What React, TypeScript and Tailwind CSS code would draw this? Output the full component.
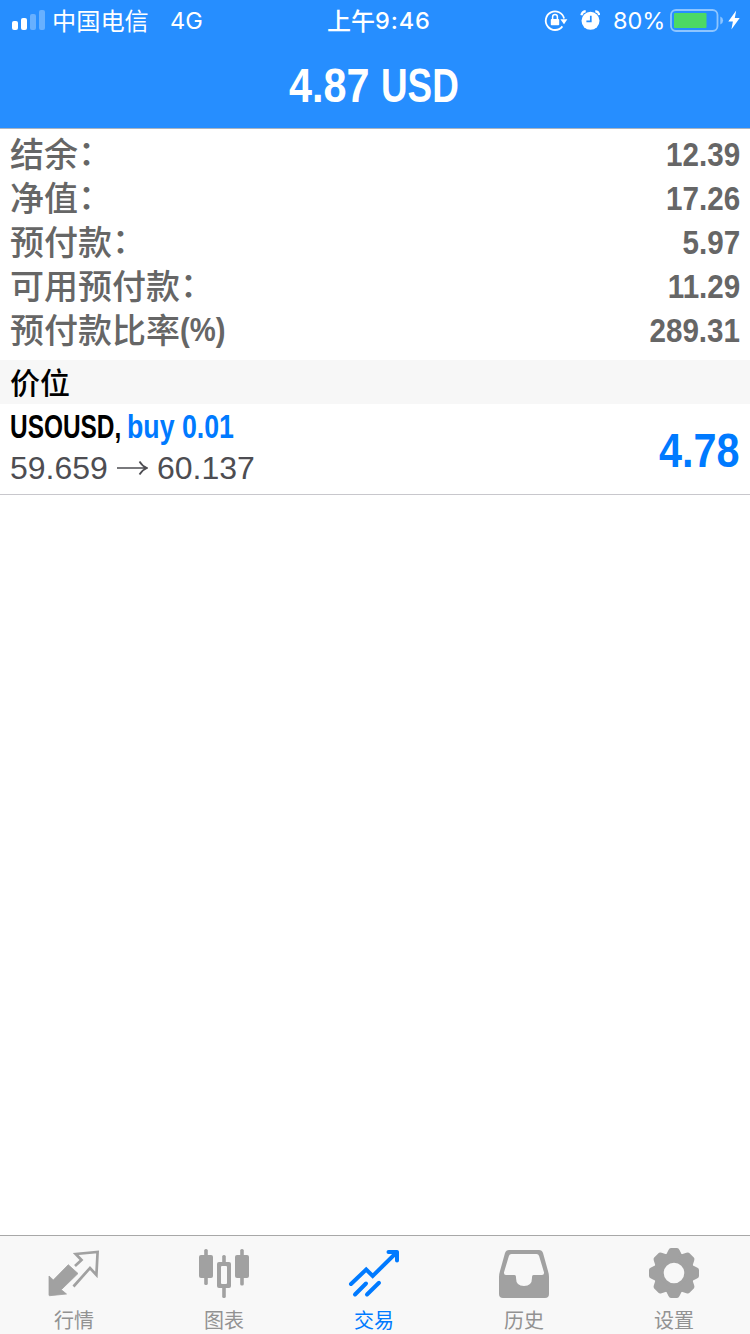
import React from "react";

const sans = "font-['Liberation_Sans','Noto_Sans_CJK_SC',sans-serif]";
const cjk = "font-['Noto_Sans_CJK_SC',sans-serif]";
const ui = "font-['Inter','Noto_Sans_CJK_SC',sans-serif]";

const rows = [
  { label: "结余", colon: true, value: "12.39" },
  { label: "净值", colon: true, value: "17.26" },
  { label: "预付款", colon: true, value: "5.97" },
  { label: "可用预付款", colon: true, value: "11.29" },
  { label: "预付款比率", suffix: "(%)", value: "289.31" },
];

function StatusBar() {
  return (
    <div className={`flex h-10 items-center text-white ${ui}`}>
      <svg className="ml-3 h-5 w-[33px] shrink-0" viewBox="0 0 33 20" fill="#fff">
        <rect x="0" y="11" width="6" height="9" rx="2" />
        <rect x="9" y="8" width="6" height="12" rx="2" />
        <rect x="18" y="4" width="6" height="16" rx="2" opacity=".3" />
        <rect x="27" y="0" width="6" height="20" rx="2" opacity=".3" />
      </svg>
      <span className={`ml-[7px] w-[118px] text-[24.2px] leading-10 whitespace-nowrap ${cjk}`}>中国电信</span>
      <span className="w-[157px] pt-px text-[23.5px] leading-10">4G</span>
      <span className={`w-12 text-[24px] leading-10 font-medium whitespace-nowrap ${cjk}`}>上午</span>
      <span className="w-[169px] pt-px text-[23.5px] leading-10 font-medium tracking-[0.9px]">9:46</span>
      <svg className="h-6 w-[24px] shrink-0" viewBox="0 0 24 24" fill="none" stroke="#fff">
        <path d="M18.4 18.4A9.3 9.3 0 1 1 20.1 10.5" strokeWidth="1.8" />
        <path d="M16.4 11.2h7L20 16.2z" fill="#fff" stroke="none" />
        <rect x="6.8" y="11" width="8.4" height="6.2" rx=".8" fill="#fff" stroke="none" />
        <path d="M8.6 11V9a2.4 2.4 0 0 1 4.8 0V11" strokeWidth="1.5" />
      </svg>
      <svg className="ml-[12px] h-6 w-[20px] shrink-0" viewBox="0 0 20 24" fill="none" stroke="#fff">
        <circle cx="10.5" cy="12.8" r="9" fill="#fff" stroke="none" />
        <path d="M1.4 7.2Q2.1 3.8 5.7 3.2M19.3 7.2Q18.9 3.8 15.3 3.2" strokeWidth="2.2" />
        <path d="M10.8 7.8V13.4H6.4" stroke="#268eff" strokeWidth="1.7" />
      </svg>
      <span className="ml-[13px] w-[57px] pt-px text-[23.5px] leading-10">80%</span>
      <svg className="h-6 w-[54px] shrink-0" viewBox="0 0 54 24" fill="none">
        <rect x="1" y="2" width="46.5" height="21" rx="5" stroke="#8ec5ff" strokeWidth="1.8" />
        <rect x="4" y="5" width="32.5" height="15" rx="1" fill="#4cd964" />
        <path d="M50.3 8.5q2.8 1.2 2.8 4t-2.8 4z" fill="#8ec5ff" />
      </svg>
      <svg className="ml-[4px] h-6 w-[12px] shrink-0" viewBox="0 0 12 24" fill="#fff">
        <path d="M8.2 2.5 0.3 13.4h4.6L3.4 21.5 11.7 10H6.8z" />
      </svg>
    </div>
  );
}

const tabs = [
  {
    label: "行情",
    icon: (
      <>
        <path d="M19.3 15.7 29 24.5 12.3 40.7 17.5 45 .7 46.7Q0 46.7 0 46V27L4.3 31z" fill="#a1a1a1" stroke="#a1a1a1" strokeWidth=".8" strokeLinejoin="round" />
        <path d="M26 17 32.5 11 26.7 5 48.6 3 47.4 26 41 19 24.5 37.5" fill="none" stroke="#a1a1a1" strokeWidth="2.7" />
      </>
    ),
  },
  {
    label: "图表",
    icon: (
      <g fill="#a1a1a1">
        <rect x="5.2" y="0" width="3.6" height="36" rx="1.6" />
        <rect x="0" y="6" width="14" height="23" rx="2" />
        <rect x="41.2" y="0" width="3.6" height="36.5" rx="1.6" />
        <rect x="36" y="6" width="14" height="23" rx="2" />
        <rect x="23.2" y="6" width="3.6" height="43" rx="1.6" />
        <rect x="18" y="13" width="14" height="26" rx="2" />
        <rect x="22" y="17" width="6" height="18" rx="1" fill="#f8f8f8" />
      </g>
    ),
  },
  {
    label: "交易",
    active: true,
    icon: (
      <g fill="none" stroke="#007aff" strokeWidth="4" strokeLinecap="round">
        <path d="M2 35 17.2 20.5 23.7 27 47.5 3.5" />
        <path d="M39.5 3H48V11.5" strokeLinejoin="round" />
        <path d="M6 45.5 17 34.5M18 45.5 30 33.8" />
      </g>
    ),
  },
  {
    label: "历史",
    icon: (
      <>
        <path d="M10 1h30q3 0 4 3l5 18q1 3 1 6v17q0 4-4 4H4q-4 0-4-4V28q0-3 1-6L6 4q1-3 4-3z" fill="#a1a1a1" />
        <path d="M12.5 5h25q2 0 2.6 2l4.8 16q.6 3-1.9 3H34.5q-1.5 0-1.5 2v1q0 8-8 8t-8-8v-1q0-2-1.5-2H7q-2.5 0-1.9-3L9.9 7q.6-2 2.6-2z" fill="#f8f8f8" />
      </>
    ),
  },
  {
    label: "设置",
    icon: (
      <g fill="#a1a1a1">
        <circle cx="25" cy="24" r="15.3" fill="none" stroke="#a1a1a1" strokeWidth="10" />
        {[0, 45, 90, 135, 180, 225, 270, 315].map((a) => (
          <path key={a} transform={`rotate(${a} 25 24)`} d="M17 6 19.5 1q.9-2 2.5-2h6q1.6 0 2.5 2L33 6v4H17z" />
        ))}
      </g>
    ),
  },
];

export default function App() {
  return (
    <div className={`flex h-[1334px] w-[750px] flex-col overflow-hidden bg-white ${sans}`}>
      <header className="h-[129px] shrink-0 border-b border-[#a9b4c2] bg-[#268eff]">
        <StatusBar />
        <h1 className="flex h-[88px] pl-[289px] text-[47.5px] leading-[92px] font-bold whitespace-nowrap text-white">
          <span className="w-[92px] origin-left scale-x-[0.87]">4.87</span>
          <span className="origin-left scale-x-[0.775]">USD</span>
        </h1>
      </header>
      <section className="h-[231px] shrink-0 pt-[3px]">
        {rows.map((r) => (
          <div key={r.label} className="flex h-11 justify-between pr-[10px] pl-[10px] leading-[44px] whitespace-nowrap text-[#666]">
            <div className="flex">
              <span className={`-mt-px h-11 text-[34px] font-medium ${cjk}`}>{r.label}</span>
              {r.colon && <span className={`-mt-[3px] h-11 text-[34px] font-medium ${cjk}`}>：</span>}
              {r.suffix && <span className="-mt-px origin-left scale-x-[0.86] text-[34px] font-bold">{r.suffix}</span>}
            </div>
            <span className="origin-right scale-x-[0.87] text-[34px] font-bold">{r.value}</span>
          </div>
        ))}
      </section>
      <div className={`h-11 shrink-0 bg-[#f7f7f7] pl-[10px] text-[30px] leading-[42px] font-medium text-black ${cjk}`}>价位</div>
      <section className="flex h-[91px] shrink-0 items-center justify-between border-b border-[#c8c7cc] pr-[11px] pl-[10px] whitespace-nowrap">
        <div>
          <div className="flex h-[45px] text-[33px] leading-[46px] font-bold">
            <span className="w-[117px] origin-left scale-x-[0.74] text-black">USOUSD,</span>
            <span className="origin-left scale-x-[0.81] text-[#007aff]">buy 0.01</span>
          </div>
          <div className="flex h-[45px] text-[32px] leading-[38px] text-[#4d4d52]">
            <span className="w-[107px]">59.659</span>
            <svg className="mt-[11px] mr-[9px] h-4 w-[31px] shrink-0" viewBox="0 0 31 16" fill="none" stroke="#4d4d52" strokeWidth="1.7">
              <path d="M0 8H29.5M22.5 1.5Q25 6 30 8Q25 10 22.5 14.5" />
            </svg>
            <span>60.137</span>
          </div>
        </div>
        <span className="mt-[3px] origin-right scale-x-[0.87] text-[47.5px] leading-[90px] font-bold text-[#007aff]">4.78</span>
      </section>
      <main className="flex-1" />
      <nav className="flex h-[99px] shrink-0 border-t border-[#a8a8a8] bg-[#f8f8f8]">
        {tabs.map((t) => (
          <div key={t.label} className="flex w-[150px] flex-col items-center pt-[13px] pr-[2px]">
            <svg className="h-[50px] w-[50px] overflow-visible" viewBox="0 0 50 50">{t.icon}</svg>
            <span className={`mt-[6px] text-[20px] leading-[30px] ${cjk} ${t.active ? "text-[#007aff]" : "text-[#929292]"}`}>{t.label}</span>
          </div>
        ))}
      </nav>
    </div>
  );
}
